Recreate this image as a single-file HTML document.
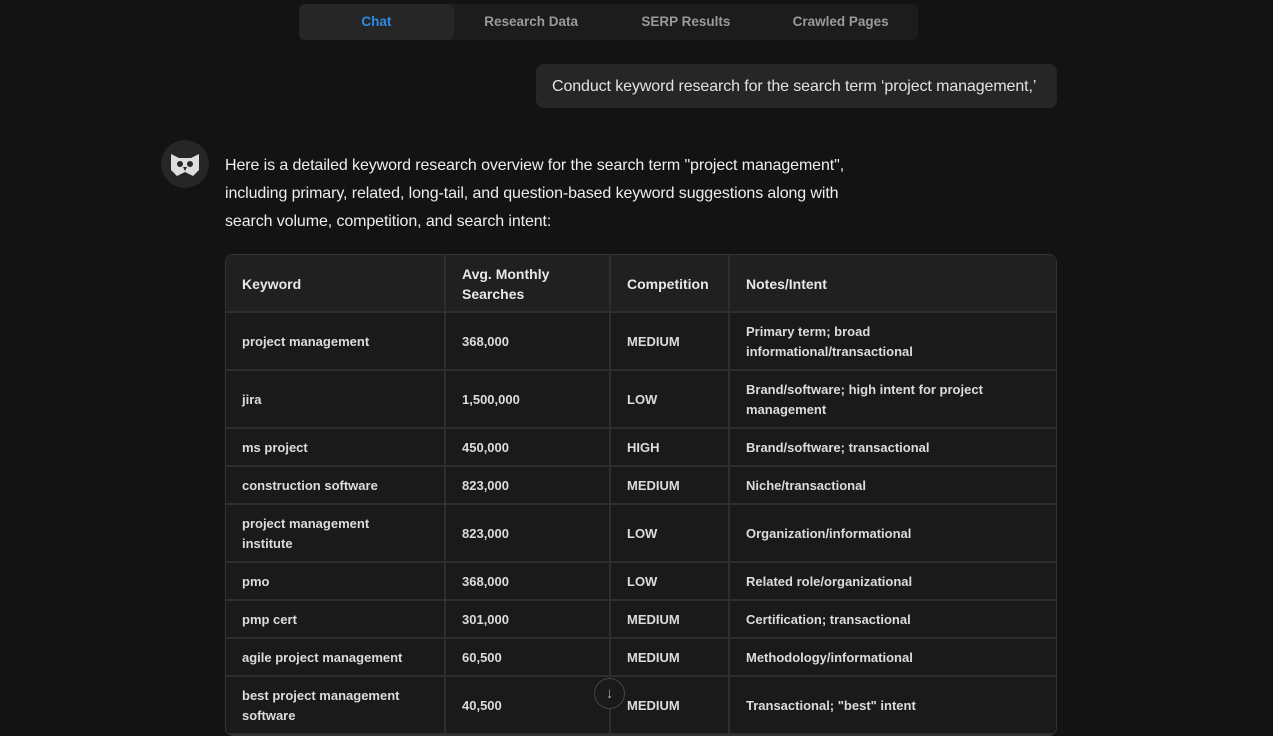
<!DOCTYPE html>
<html><head><meta charset="utf-8"><style>
*{margin:0;padding:0;box-sizing:border-box}
body{width:1273px;height:726px;overflow:hidden;background:#131313;font-family:"Liberation Sans",sans-serif;color:#e6e6e6;position:relative}
.tabs{position:absolute;left:299px;top:4px;width:619px;height:36px;background:#1c1c1c;border-radius:6px;display:flex}
.tabs div{width:155px;text-align:center;line-height:36px;font-size:13.5px;font-weight:bold;color:#9a9a9a}
.tabs .a{background:#262626;color:#2f8ae6;border-radius:6px}
.bub{position:absolute;left:536px;top:64px;width:521px;height:44px;background:#262626;border-radius:8px;font-size:16px;line-height:46px;padding-left:16px;color:#e2e2e2;letter-spacing:-0.1px}
.av{position:absolute;left:161px;top:140px;width:48px;height:48px;border-radius:50%;background:#262626}
.txt{position:absolute;left:225px;top:152px;font-size:16px;line-height:28px;color:#eee;width:660px;letter-spacing:-0.1px}
table{position:absolute;left:225px;top:254px;width:832px;border-collapse:separate;border-spacing:0;border:1px solid #343434;border-radius:8px;overflow:hidden;font-size:13px;font-weight:bold;color:#dcdcdc}
td,th{border-right:2px solid #2e2e2e;border-bottom:2px solid #2e2e2e;padding:1px 16px 0;text-align:left;line-height:20px;background:#1a1a1a}
th{background:#202020;font-size:14px;height:58px;color:#e8e8e8}
td:last-child,th:last-child{border-right:none}
.sc{position:absolute;left:594px;top:678px;width:31px;height:31px;border-radius:50%;border:1px solid #444;background:#1a1a1a;color:#aaa;text-align:center;line-height:29px;font-size:15px}
</style></head><body>
<div class="tabs"><div class="a">Chat</div><div>Research Data</div><div>SERP Results</div><div>Crawled Pages</div></div>
<div class="bub">Conduct keyword research for the search term ‘project management,’</div>
<div class="av"><svg width="48" height="48" viewBox="0 0 48 48"><path d="M10 14 L18 18 L30 18 L38 14 L38 30 L32 36 L24 32 L16 36 L10 30Z" fill="#ddd"/><circle cx="19" cy="24" r="3" fill="#262626"/><circle cx="29" cy="24" r="3" fill="#262626"/><path d="M22 27 L24 31 L26 27Z" fill="#262626"/></svg></div>
<div class="txt">Here is a detailed keyword research overview for the search term "project management", including primary, related, long-tail, and question-based keyword suggestions along with search volume, competition, and search intent:</div>
<table>
<colgroup><col style="width:220px"><col style="width:165px"><col style="width:119px"><col></colgroup>
<tr><th>Keyword</th><th>Avg. Monthly<br>Searches</th><th>Competition</th><th>Notes/Intent</th></tr>
<tr style="height:58px"><td>project management</td><td>368,000</td><td>MEDIUM</td><td>Primary term; broad<br>informational/transactional</td></tr>
<tr style="height:58px"><td>jira</td><td>1,500,000</td><td>LOW</td><td>Brand/software; high intent for project<br>management</td></tr>
<tr style="height:38px"><td>ms project</td><td>450,000</td><td>HIGH</td><td>Brand/software; transactional</td></tr>
<tr style="height:38px"><td>construction software</td><td>823,000</td><td>MEDIUM</td><td>Niche/transactional</td></tr>
<tr style="height:58px"><td>project management<br>institute</td><td>823,000</td><td>LOW</td><td>Organization/informational</td></tr>
<tr style="height:38px"><td>pmo</td><td>368,000</td><td>LOW</td><td>Related role/organizational</td></tr>
<tr style="height:38px"><td>pmp cert</td><td>301,000</td><td>MEDIUM</td><td>Certification; transactional</td></tr>
<tr style="height:38px"><td>agile project management</td><td>60,500</td><td>MEDIUM</td><td>Methodology/informational</td></tr>
<tr style="height:58px"><td>best project management<br>software</td><td>40,500</td><td>MEDIUM</td><td>Transactional; "best" intent</td></tr>
</table>
<div class="sc">↓</div>
</body></html>
